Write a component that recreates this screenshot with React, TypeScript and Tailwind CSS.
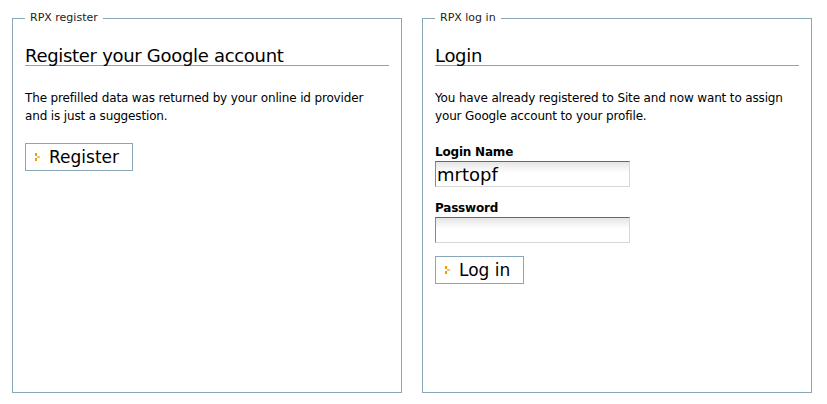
import React from 'react';

const Arrow: React.FC = () => (
  <svg width="5" height="8" viewBox="0 0 5 8" className="block" aria-hidden>
    <rect x="0" y="0" width="2" height="3" fill="#f39b00" />
    <rect x="2" y="3" width="3" height="2" fill="#fcc25e" />
    <rect x="0" y="5" width="2" height="3" fill="#f39b00" />
  </svg>
);

const Button: React.FC<{ label: string }> = ({ label }) => (
  <button
    type="button"
    className="flex items-center h-[28px] border border-[#8aa7ba] bg-white pl-[9px] pr-[13px] text-[17px] leading-[20px] text-black"
  >
    <span className="mt-[-1px]">
      <Arrow />
    </span>
    <span className="ml-[9px]">{label}</span>
  </button>
);

const Field: React.FC<{ label: string; value?: string; type?: string; className?: string }> = ({
  label,
  value,
  type = 'text',
  className = '',
}) => (
  <div className={className}>
    <label className="block text-[12px] leading-[14px] font-bold text-black tracking-[-0.2px]">{label}</label>
    <input
      type={type}
      defaultValue={value}
      className="block mt-[2px] w-[195px] h-[26px] border border-t-[#666] border-l-[#888] border-r-[#d6d6d6] border-b-[#d6d6d6] bg-gradient-to-b from-[#e6e6e6] to-white to-[45%] px-[1px] text-[18px] text-black outline-none"
    />
  </div>
);

const Panel: React.FC<{ legend: string; title: string; children: React.ReactNode }> = ({
  legend,
  title,
  children,
}) => (
  <fieldset className="w-[390px] h-[382px] border border-[#8aa7ba] px-[12px] pt-0 m-0 min-w-0">
    <legend className="px-[5px] text-[11px] leading-[14px] text-[#222]">{legend}</legend>
    <h2 className="mt-[21px] border-b border-[#8aa7ba] text-[18px] leading-[19px] font-normal text-black tracking-[-0.3px]">
      {title}
    </h2>
    {children}
  </fieldset>
);

export default function App() {
  return (
    <div
      className="w-[827px] h-[404px] bg-white pl-[12px] flex gap-[20px]"
      style={{ fontFamily: '"DejaVu Sans", Verdana, sans-serif' }}
    >
      <div className="pt-[11px]">
        <Panel legend="RPX register" title="Register your Google account">
          <p className="mt-[23px] text-[12px] leading-[18px] text-black tracking-[-0.15px]">
            The prefilled data was returned by your online id provider
            <br />
            and is just a suggestion.
          </p>
          <div className="mt-[18px]">
            <Button label="Register" />
          </div>
        </Panel>
      </div>
      <div className="pt-[11px]">
        <Panel legend="RPX log in" title="Login">
          <p className="mt-[23px] text-[12px] leading-[18px] text-black tracking-[-0.15px]">
            You have already registered to Site and now want to assign
            <br />
            your Google account to your profile.
          </p>
          <Field className="mt-[20px]" label="Login Name" value="mrtopf" />
          <Field className="mt-[14px]" label="Password" type="password" />
          <div className="mt-[13px]">
            <Button label="Log in" />
          </div>
        </Panel>
      </div>
    </div>
  );
}
